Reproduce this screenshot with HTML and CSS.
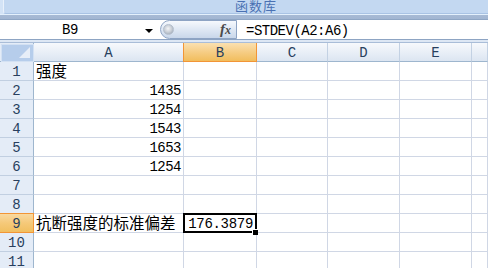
FILE: index.html
```html
<!DOCTYPE html>
<html>
<head>
<meta charset="utf-8">
<link rel="stylesheet" href="styles.css">
</head>
<body>
<div class="app">
  <div class="ribbon">
    <div class="group"><span class="group-label">函数库</span></div>
  </div>
  <div class="ribbon-edge"></div>
  <div class="formula-bar">
    <div class="namebox"><span class="name">B9</span><span class="arrow"></span></div>
    <div class="pill"><span class="knob"></span><span class="fx">f<span class="fx-x">x</span></span></div>
    <div class="formula">=STDEV(A2:A6)</div>
  </div>
  <div class="band"></div>
  <div class="sheet">
    <div class="corner"><span class="corner-tri"></span></div>
    <div class="colhead">A</div>
    <div class="colhead sel">B</div>
    <div class="colhead">C</div>
    <div class="colhead">D</div>
    <div class="colhead">E</div>
    <div class="colhead"></div>

    <div class="rowhead">1</div>
    <div class="cell txt">强度</div><div class="cell"></div><div class="cell"></div><div class="cell"></div><div class="cell"></div><div class="cell"></div>

    <div class="rowhead">2</div>
    <div class="cell num">1435</div><div class="cell"></div><div class="cell"></div><div class="cell"></div><div class="cell"></div><div class="cell"></div>

    <div class="rowhead">3</div>
    <div class="cell num">1254</div><div class="cell"></div><div class="cell"></div><div class="cell"></div><div class="cell"></div><div class="cell"></div>

    <div class="rowhead">4</div>
    <div class="cell num">1543</div><div class="cell"></div><div class="cell"></div><div class="cell"></div><div class="cell"></div><div class="cell"></div>

    <div class="rowhead">5</div>
    <div class="cell num">1653</div><div class="cell"></div><div class="cell"></div><div class="cell"></div><div class="cell"></div><div class="cell"></div>

    <div class="rowhead">6</div>
    <div class="cell num">1254</div><div class="cell"></div><div class="cell"></div><div class="cell"></div><div class="cell"></div><div class="cell"></div>

    <div class="rowhead">7</div>
    <div class="cell"></div><div class="cell"></div><div class="cell"></div><div class="cell"></div><div class="cell"></div><div class="cell"></div>

    <div class="rowhead">8</div>
    <div class="cell"></div><div class="cell"></div><div class="cell"></div><div class="cell"></div><div class="cell"></div><div class="cell"></div>

    <div class="rowhead sel">9</div>
    <div class="cell txt">抗断强度的标准偏差</div>
    <div class="cell num active">176.3879<span class="sel-box"><span class="handle"></span></span></div>
    <div class="cell"></div><div class="cell"></div><div class="cell"></div><div class="cell"></div>

    <div class="rowhead">10</div>
    <div class="cell"></div><div class="cell"></div><div class="cell"></div><div class="cell"></div><div class="cell"></div><div class="cell"></div>

    <div class="rowhead">11</div>
    <div class="cell"></div><div class="cell"></div><div class="cell"></div><div class="cell"></div><div class="cell"></div><div class="cell"></div>
  </div>
</div>
</body>
</html>
```

FILE: styles.css
```css
* { box-sizing: border-box; }
html, body {
  margin: 0;
  padding: 0;
  width: 488px;
  height: 268px;
  overflow: hidden;
  background: #ffffff;
}
.app {
  width: 488px;
  height: 268px;
  overflow: hidden;
  font-family: "Liberation Mono", "Noto Sans CJK SC", monospace;
  color: #000;
}

/* ribbon */
.ribbon {
  height: 14px;
  background: #d3e3f6;
  display: flex;
}
.group {
  flex: 1;
  margin-left: 3px;
  height: 14px;
  background: #c3d8f1;
  border-left: 1px solid #e9f1fb;
  border-bottom: 1px solid #a9c3e4;
  border-bottom-left-radius: 3px;
  padding-left: 231px;
}
.group-label {
  display: block;
  font-family: "Noto Sans CJK SC", sans-serif;
  font-size: 13px;
  line-height: 11px;
  color: #4a71b3;
  letter-spacing: 1px;
}
.ribbon-edge {
  height: 6px;
  background: linear-gradient(#e3f0fc 0, #e3f0fc 1px, #a7bad4 1px, #a2b6d2 5px, #8fa6c4 5px);
}

/* formula bar */
.formula-bar {
  height: 19px;
  display: flex;
  background: #fff;
}
.namebox {
  width: 160px;
  display: flex;
  align-items: center;
  padding-left: 62px;
}
.name {
  font-size: 14px;
  line-height: 16px;
  letter-spacing: -0.5px;
  padding-top: 1px;
}
.arrow {
  margin-left: 67px;
  width: 0;
  height: 0;
  border-left: 4px solid transparent;
  border-right: 4px solid transparent;
  border-top: 4px solid #000;
  margin-top: 2px;
}
.pill {
  width: 77px;
  height: 19px;
  border: 1px solid #8ea4c4;
  border-radius: 10px 0 0 10px;
  background: linear-gradient(#f6f9fd, #dfe8f4 50%, #c9d7ea);
  display: flex;
  align-items: center;
  justify-content: space-between;
  padding: 0 5px 0 2px;
}
.knob {
  width: 11px;
  height: 11px;
  border-radius: 50%;
  background: radial-gradient(circle at 45% 40%, #f4f5f7 0, #c8ced6 50%, #8e99a8 100%);
  border: 1px solid #b4bfcd;
}
.fx {
  font-family: "Liberation Serif", serif;
  font-style: italic;
  font-weight: bold;
  font-size: 15px;
  line-height: 15px;
  color: #4b4b4b;
}
.fx-x {
  font-size: 12px;
}
.formula {
  flex: 1;
  padding-left: 9px;
  font-size: 14px;
  line-height: 16px;
  letter-spacing: -0.5px;
  padding-top: 3px;
}

.band {
  height: 4px;
  background: linear-gradient(#8da4c3 0, #8da4c3 1px, #dde7f4 1px, #dde7f4 3px, #a9bdd8 3px);
}

/* sheet grid */
.sheet {
  display: grid;
  grid-template-columns: 34px 150px 73px 71px 72px 72px 16px;
  grid-auto-rows: 19px;
}
.corner {
  position: relative;
  background: #e4ecf7;
  border-right: 1px solid #9eb6ce;
  border-bottom: 1px solid #9eb6ce;
  padding: 1px 1px 1px 1px;
}
.corner::before {
  content: "";
  display: block;
  width: 100%;
  height: 100%;
  background: #b6cdeb;
  border: 1px solid #d3e1f3;
}
.corner-tri {
  position: absolute;
  right: 3px;
  bottom: 3px;
  width: 0;
  height: 0;
  border-left: 11px solid transparent;
  border-bottom: 11px solid #e7eef8;
}
.colhead {
  background: linear-gradient(#f7f9fc, #e9eff7 50%, #dce5f1);
  border-right: 1px solid #c3d1e3;
  border-bottom: 1px solid #9eb6ce;
  text-align: center;
  font-size: 14px;
  line-height: 16px;
  padding-top: 2px;
  color: #283f5e;
}
.colhead.sel {
  background: linear-gradient(#fae0b0, #f6cd85 50%, #f1bd5c);
  border-bottom-color: #f29536;
  border-right-color: #f29536;
  box-shadow: -1px 0 0 #f29536;
}
.rowhead {
  background: #e4ecf7;
  border-right: 1px solid #9eb6ce;
  border-bottom: 1px solid #c1cfe1;
  text-align: center;
  font-size: 14px;
  line-height: 16px;
  padding-top: 2px;
  color: #283f5e;
}
.rowhead.sel {
  background: linear-gradient(#f9d9a1, #f5c979 50%, #f1bf60);
  border-bottom-color: #f29536;
  border-right-color: #f29536;
  box-shadow: 0 -1px 0 #f29536;
}
.cell {
  border-right: 1px solid #d0d7e5;
  border-bottom: 1px solid #d0d7e5;
  white-space: nowrap;
  overflow: visible;
}
.cell.num {
  text-align: right;
  font-size: 14px;
  line-height: 16px;
  letter-spacing: -0.5px;
  padding: 2px 2px 0 0;
}
.cell.txt {
  font-family: "Noto Sans CJK SC", sans-serif;
  font-size: 15.5px;
  line-height: 17px;
  padding-left: 2px;
}
.cell.active {
  position: relative;
  padding-right: 3px;
  letter-spacing: -0.3px;
}
.sel-box {
  position: absolute;
  left: -1px;
  top: -1px;
  right: -1px;
  bottom: -1px;
  border: 2px solid #000;
}
.handle {
  position: absolute;
  right: -3px;
  bottom: -4px;
  width: 6px;
  height: 6px;
  background: #000;
  border-left: 1px solid #fff;
  border-top: 1px solid #fff;
}
```
